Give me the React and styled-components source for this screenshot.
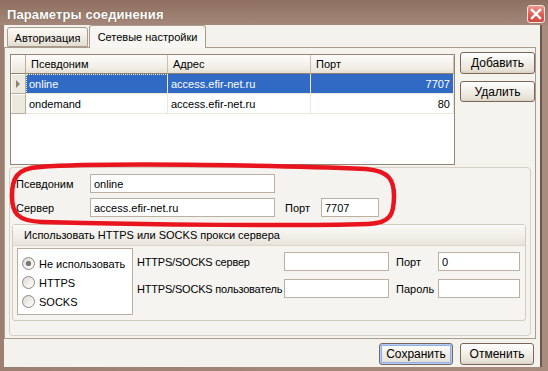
import React from "react";
import styled, { createGlobalStyle } from "styled-components";

const Global = createGlobalStyle`
  html, body { margin: 0; padding: 0; background: #fff; }
  body { font-family: "Liberation Sans", Arial, sans-serif; font-size: 11px; color: #000; }
  * { box-sizing: border-box; }
`;

const Window = styled.div`
  position: relative;
  width: 548px;
  height: 371px;
  display: flex;
  flex-direction: column;
  background: linear-gradient(90deg, #9c7f70, #a88c7d);
  overflow: hidden;
`;

const TitleBar = styled.div`
  height: 25px;
  display: flex;
  align-items: center;
  justify-content: space-between;
  padding: 0 3px 0 7px;
  background: linear-gradient(#8e6f60, #9b7e6e 60%, #a3877a);
`;

const Title = styled.div`
  color: #fff;
  font-weight: bold;
  font-size: 13px;
  letter-spacing: 0.1px;
  text-shadow: 0 0 1px rgba(60, 30, 20, 0.5);
  margin-top: 3px;
`;

const CloseBtn = styled.div`
  width: 18px;
  height: 18px;
  margin-top: 2px;
  border-radius: 3px;
  border: 1px solid #f4e4e0;
  background: linear-gradient(#ef958f, #dc5d55 55%, #cf4a42);
  display: flex;
  align-items: center;
  justify-content: center;
`;

const Body = styled.div`
  flex: 1;
  margin: 0 6px 4px 4px;
  border-right: 2px solid #6e574b;
  background: #f4f2ed;
  display: flex;
  flex-direction: column;
`;

const TabStrip = styled.div`
  height: 22px;
  display: flex;
  align-items: flex-end;
  padding-left: 3px;
  position: relative;
  z-index: 2;
`;

const Tab = styled.div`
  height: ${(p) => (p.$active ? "23px" : "20px")};
  width: ${(p) => (p.$active ? "117px" : "81px")};
  margin-bottom: ${(p) => (p.$active ? "-1px" : "0")};
  margin-right: 1px;
  display: flex;
  align-items: center;
  justify-content: center;
  padding-top: ${(p) => (p.$active ? "0" : "2px")};
  border: 1px solid #a99c8c;
  border-bottom: ${(p) => (p.$active ? "none" : "1px solid #a99c8c")};
  border-radius: 3px 3px 0 0;
  background: ${(p) =>
    p.$active ? "#f7f6f2" : "linear-gradient(#fbfaf7, #ece8df 70%, #e3ded3)"};
`;

const TabPage = styled.div`
  height: 292px;
  margin-right: 4px;
  border: 1px solid #a99c8c;
  background: #f5f3ee;
  display: flex;
  flex-direction: column;
`;

const TopArea = styled.div`
  display: flex;
  align-items: flex-start;
  padding: 4px 0 0 5px;
  height: 117px;
`;

const Grid = styled.div`
  width: 446px;
  height: 111px;
  margin-top: 2px;
  border: 1px solid #948676;
  background: #fff;
`;

const GridRow = styled.div`
  display: flex;
  height: ${(p) => (p.$header ? "19px" : "20px")};
`;

const IndicatorCell = styled.div`
  width: 15px;
  height: 100%;
  background: ${(p) => (p.$header ? "linear-gradient(#fdfcfa, #ebe6da)" : "#ece9df")};
  border-right: 1px solid #b8ae9c;
  border-bottom: 1px solid ${(p) => (p.$header ? "#8f8272" : "#b8ae9c")};
  box-shadow: inset 1px 1px 0 #fff;
  display: flex;
  align-items: center;
  justify-content: center;
`;

const HeadCell = styled.div`
  width: ${(p) => p.$w}px;
  height: 100%;
  padding-left: 5px;
  display: flex;
  align-items: center;
  background: linear-gradient(#fdfcfa, #f1eee6 70%, #e6e0d2);
  border-right: 1px solid #c9c0ad;
  border-bottom: 1px solid #8f8272;
  border-top-right-radius: ${(p) => (p.$last ? "3px" : "0")};
`;

const Cell = styled.div`
  width: ${(p) => p.$w}px;
  height: 100%;
  display: flex;
  align-items: center;
  justify-content: ${(p) => (p.$right ? "flex-end" : "flex-start")};
  padding: 0 3px 0 3px;
  background: ${(p) => (p.$sel ? "#316ac5" : "#fff")};
  color: ${(p) => (p.$sel ? "#fff" : "#000")};
  border-right: 1px solid #ebe7da;
  border-bottom: 1px solid #ebe7da;
  outline: ${(p) => (p.$focus ? "1px dotted #f6f0c8" : "none")};
  outline-offset: -1px;
`;

const SideButtons = styled.div`
  display: flex;
  flex-direction: column;
  gap: 7px;
  margin-left: 5px;
`;

const Button = styled.div`
  width: ${(p) => p.$w || 75}px;
  height: ${(p) => p.$h || 22}px;
  border: 1px solid #7b675a;
  border-radius: 3px;
  background: linear-gradient(#ffffff, #f3f1ea 40%, #e8e3d8 85%, #d9d2c4);
  display: flex;
  align-items: center;
  justify-content: center;
  font-size: 12px;
  box-shadow: ${(p) => (p.$default ? "inset 0 0 0 1px #b5cdf3, inset 0 0 0 2px #8fb0ea" : "none")};
`;

const LowerPanel = styled.div`
  margin: 2px 4px 0 4px;
  height: 169px;
  border: 1px solid #d6cfc3;
  border-radius: 4px;
  background: #f5f3ef;
  padding: 6px 4px 0 6px;
  display: flex;
  flex-direction: column;
`;

const FieldRow = styled.div`
  display: flex;
  align-items: center;
  height: 19px;
  margin-bottom: 5px;
`;

const Label = styled.div`
  width: ${(p) => (p.$w ? `${p.$w}px` : "auto")};
  padding-left: ${(p) => p.$pl || 0}px;
  white-space: nowrap;
  font-size: 11px;
  letter-spacing: ${(p) => (p.$tight ? "-0.2px" : "0")};
`;

const Input = styled.div`
  width: ${(p) => p.$w}px;
  height: 19px;
  border: 1px solid #bbb0a2;
  background: #fff;
  padding-left: 3px;
  display: flex;
  align-items: center;
  font-size: 11px;
`;

const GroupBox = styled.div`
  margin: 2px 0 0 -4px;
  width: 514px;
  height: 97px;
  border: 1px solid #d2cbbe;
  border-radius: 3px;
  background: #f6f4f0;
  display: flex;
  flex-direction: column;
`;

const GroupHeader = styled.div`
  height: 21px;
  padding-left: 11px;
  display: flex;
  align-items: center;
  background: linear-gradient(#fbfaf8, #f1eee8 60%, #e8e4dc);
  border-bottom: 1px solid #ddd6ca;
`;

const GroupBody = styled.div`
  display: flex;
  padding: 2px 0 0 4px;
`;

const RadioBox = styled.div`
  width: 116px;
  height: 67px;
  border: 1px solid #b8ad9f;
  background: #fff;
  padding: 5px 0 0 4px;
  display: flex;
  flex-direction: column;
`;

const RadioRow = styled.div`
  height: 19px;
  display: flex;
  align-items: center;
  gap: 4px;
  font-size: 11px;
`;

const RadioCircle = styled.div`
  width: 13px;
  height: 13px;
  border-radius: 50%;
  border: 1px solid #8e8880;
  background: linear-gradient(135deg, #dedbd2, #ffffff);
  display: flex;
  align-items: center;
  justify-content: center;
  &::after {
    content: "";
    width: 5px;
    height: 5px;
    border-radius: 50%;
    background: ${(p) => (p.$checked ? "radial-gradient(#8a8a8a, #4a4a4a)" : "transparent")};
  }
`;

const ProxyGrid = styled.div`
  display: grid;
  grid-template-columns: 147px 105px 49px 82px;
  grid-auto-rows: 19px;
  row-gap: 8px;
  align-items: center;
  margin: 4px 0 0 4px;
`;

const Footer = styled.div`
  display: flex;
  justify-content: flex-end;
  gap: 7px;
  padding: 4px 6px 0 0;
`;

const Annotation = styled.svg`
  position: absolute;
  left: 0;
  top: 0;
  pointer-events: none;
`;

const cols = [
  { name: "Псевдоним", w: 142 },
  { name: "Адрес", w: 143 },
  { name: "Порт", w: 143 },
];

const rows = [
  { alias: "online", addr: "access.efir-net.ru", port: "7707", sel: true },
  { alias: "ondemand", addr: "access.efir-net.ru", port: "80", sel: false },
];

export default function App() {
  return (
    <>
      <Global />
      <Window>
        <TitleBar>
          <Title>Параметры соединения</Title>
          <CloseBtn>
            <svg width="12" height="12" viewBox="0 0 12 12">
              <path d="M2 2 L10 10 M10 2 L2 10" stroke="#fff" strokeWidth="2.4" strokeLinecap="square" />
            </svg>
          </CloseBtn>
        </TitleBar>
        <Body>
          <TabStrip>
            <Tab>Авторизация</Tab>
            <Tab $active>Сетевые настройки</Tab>
          </TabStrip>
          <TabPage>
            <TopArea>
              <Grid>
                <GridRow $header>
                  <IndicatorCell $header />
                  {cols.map((c, i) => (
                    <HeadCell key={c.name} $w={c.w} $last={i === cols.length - 1}>
                      {c.name}
                    </HeadCell>
                  ))}
                </GridRow>
                {rows.map((r) => (
                  <GridRow key={r.alias}>
                    <IndicatorCell>
                      {r.sel && (
                        <svg width="5" height="8" viewBox="0 0 5 8">
                          <path d="M0 0 L4 4 L0 8 Z" fill="#8a8478" />
                        </svg>
                      )}
                    </IndicatorCell>
                    <Cell $w={142} $sel={r.sel} $focus={r.sel}>{r.alias}</Cell>
                    <Cell $w={143} $sel={r.sel}>{r.addr}</Cell>
                    <Cell $w={143} $sel={r.sel} $right>{r.port}</Cell>
                  </GridRow>
                ))}
              </Grid>
              <SideButtons>
                <Button>Добавить</Button>
                <Button $h={21}>Удалить</Button>
              </SideButtons>
            </TopArea>
            <LowerPanel>
              <FieldRow>
                <Label $w={74}>Псевдоним</Label>
                <Input $w={185}>online</Input>
              </FieldRow>
              <FieldRow>
                <Label $w={74}>Сервер</Label>
                <Input $w={185}>access.efir-net.ru</Input>
                <Label $w={46} $pl={10}>Порт</Label>
                <Input $w={58}>7707</Input>
              </FieldRow>
              <GroupBox>
                <GroupHeader>Использовать HTTPS или SOCKS прокси сервера</GroupHeader>
                <GroupBody>
                  <RadioBox>
                    <RadioRow><RadioCircle $checked />Не использовать</RadioRow>
                    <RadioRow><RadioCircle />HTTPS</RadioRow>
                    <RadioRow><RadioCircle />SOCKS</RadioRow>
                  </RadioBox>
                  <ProxyGrid>
                    <Label $tight>HTTPS/SOCKS сервер</Label>
                    <Input $w={105} />
                    <Label $pl={7}>Порт</Label>
                    <Input $w={82}>0</Input>
                    <Label $tight>HTTPS/SOCKS пользователь</Label>
                    <Input $w={105} />
                    <Label $pl={7}>Пароль</Label>
                    <Input $w={82} />
                  </ProxyGrid>
                </GroupBody>
              </GroupBox>
            </LowerPanel>
          </TabPage>
          <Footer>
            <Button $w={74} $default>Сохранить</Button>
            <Button $w={74}>Отменить</Button>
          </Footer>
        </Body>
        <Annotation width="548" height="371" viewBox="0 0 548 371">
          <path
            d="M40 167 C 110 162, 300 166, 366 169 C 390 171, 394 181, 394 196 C 394 214, 391 223, 368 224 C 300 226, 150 225, 42 222 C 17 221, 12 213, 12 196 C 12 179, 16 168, 40 167 Z"
            fill="none"
            stroke="#e8151f"
            strokeWidth="4.5"
          />
        </Annotation>
      </Window>
    </>
  );
}
